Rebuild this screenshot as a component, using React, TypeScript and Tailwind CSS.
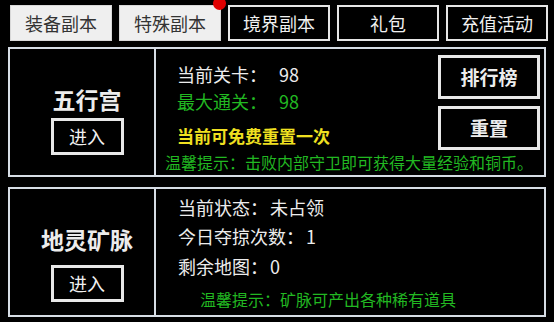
import React from "react";

const font = { fontFamily: '"Noto Sans CJK SC", "Noto Sans", sans-serif' };

function Tab({ label, light, dot }: { label: string; light?: boolean; dot?: boolean }) {
  return (
    <div
      className={
        light
          ? "relative w-[102px] h-[36px] flex items-center justify-center bg-[#efefef] border border-[#d8d8d8] text-[#333] text-[18px]"
          : "relative w-[102px] h-[36px] flex items-center justify-center bg-black border-2 border-[#e6e6e6] text-[#f0f0f0] text-[18px]"
      }
    >
      {label}
      {dot && <span className="absolute -right-[6px] -top-[9px] w-[13px] h-[13px] rounded-full bg-[#e00000]" />}
    </div>
  );
}

function EnterBtn() {
  return (
    <div className="w-[73px] h-[37px] border-[3px] border-[#e8e8e8] flex items-center justify-center text-[18px] text-[#f0f0f0]">
      进入
    </div>
  );
}

export default function App() {
  return (
    <div className="w-[554px] h-[322px] bg-black overflow-hidden text-[#ececec]" style={font}>
      <div className="flex gap-[7px] pl-[10px] pt-[5px]">
        <Tab label="装备副本" light />
        <Tab label="特殊副本" light dot />
        <Tab label="境界副本" />
        <Tab label="礼包" />
        <Tab label="充值活动" />
      </div>

      {/* Panel 1 */}
      <div className="ml-[8px] mt-[6px] w-[538px] h-[130px] border-2 border-[#d6dde5] flex">
        <div className="w-[146px] shrink-0 border-r-2 border-[#d6dde5] flex flex-col items-center pl-[10px] pt-[36px]">
          <div className="text-[23px] font-bold leading-[28px]">五行宫</div>
          <div className="mt-[5px]">
            <EnterBtn />
          </div>
        </div>
        <div className="flex-1 min-w-0 flex flex-col">
          <div className="flex">
            <div className="flex-1 flex flex-col">
              <div className="pl-[21px] pt-[13px] text-[18px] leading-[24px]">
                当前关卡：<span className="ml-[12px]">98</span>
              </div>
              <div className="pl-[21px] mt-[3px] text-[18px] leading-[24px] text-[#22b822]">
                最大通关：<span className="ml-[12px]">98</span>
              </div>
              <div className="pl-[21px] mt-[11px] text-[17px] font-bold leading-[24px] text-[#f0e020]">
                当前可免费重置一次
              </div>
            </div>
            <div className="w-[102px] shrink-0 mr-[4px] pt-[6px] flex flex-col gap-[7px]">
              <div className="h-[44px] border-[3px] border-[#e8e8e8] flex items-center justify-center text-[19px] font-bold">
                排行榜
              </div>
              <div className="h-[44px] border-[3px] border-[#e8e8e8] flex items-center justify-center text-[19px] font-bold">
                重置
              </div>
            </div>
          </div>
          <div className="pl-[9px] mt-[1px] text-[16px] leading-[22px] text-[#22b822] whitespace-nowrap">
            温馨提示：击败内部守卫即可获得大量经验和铜币。
          </div>
        </div>
      </div>

      {/* Panel 2 */}
      <div className="ml-[8px] mt-[10px] w-[538px] h-[130px] border-2 border-[#d6dde5] flex">
        <div className="w-[146px] shrink-0 border-r-2 border-[#d6dde5] flex flex-col items-center pl-[10px] pt-[36px]">
          <div className="text-[23px] font-bold leading-[28px]">地灵矿脉</div>
          <div className="mt-[12px]">
            <EnterBtn />
          </div>
        </div>
        <div className="flex-1 flex flex-col pl-[22px] text-[18px] leading-[24px]">
          <div className="pt-[6px]">当前状态：<span className="ml-[2px]">未占领</span></div>
          <div className="mt-[5px]">今日夺掠次数：<span className="ml-[2px]">1</span></div>
          <div className="mt-[6px]">剩余地图：<span className="ml-[2px]">0</span></div>
          <div className="mt-[9px] pl-[22px] text-[16px] text-[#22b822]">温馨提示：矿脉可产出各种稀有道具</div>
        </div>
      </div>
    </div>
  );
}
